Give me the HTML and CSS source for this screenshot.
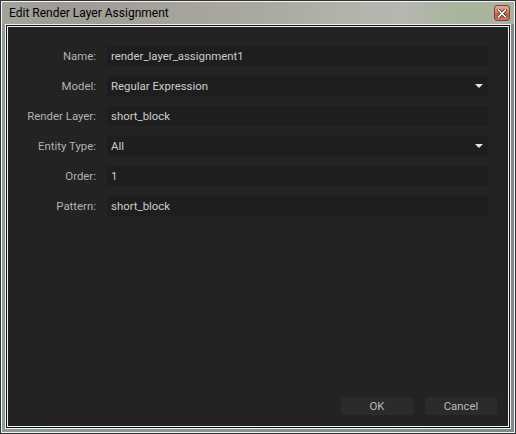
FILE: index.html
```html
<!DOCTYPE html>
<html>
<head>
<meta charset="utf-8">
<link rel="stylesheet" href="styles.css">
</head>
<body>
<div class="window">
  <div class="titlebar">
    <span class="title">Edit Render Layer Assignment</span>
    <div class="close">
      <svg width="10" height="9" viewBox="0 0 10 9">
        <path d="M1.5 1 L8.5 8 M8.5 1 L1.5 8" stroke="#3a3a3a" stroke-width="3.2" stroke-linecap="square"/>
        <path d="M1.5 1 L8.5 8 M8.5 1 L1.5 8" stroke="#ffffff" stroke-width="1.6" stroke-linecap="square"/>
      </svg>
    </div>
  </div>
  <div class="cf1"><div class="cf2"><div class="cf3">
    <div class="content">
      <div class="form">
        <label class="lbl">Name:</label>
        <div class="field">render_layer_assignment1</div>
        <label class="lbl">Model:</label>
        <div class="field combo">Regular Expression<span class="arrow"></span></div>
        <label class="lbl">Render Layer:</label>
        <div class="field">short_block</div>
        <label class="lbl">Entity Type:</label>
        <div class="field combo">All<span class="arrow"></span></div>
        <label class="lbl">Order:</label>
        <div class="field">1</div>
        <label class="lbl">Pattern:</label>
        <div class="field">short_block</div>
      </div>
      <div class="buttons">
        <div class="btn">OK</div>
        <div class="btn">Cancel</div>
      </div>
    </div>
  </div></div></div>
</div>
</body>
</html>
```

FILE: styles.css
```css
html, body {
  margin: 0;
  padding: 0;
  background: #888;
}
.window {
  width: 516px;
  height: 434px;
  box-sizing: border-box;
  border: 1px solid #2e3336;
  box-shadow: inset 0 0 0 1px #f4f4f4;
  padding: 1px 4px 4px 4px;
  background: linear-gradient(90deg, #8f9a9c 0%, #8a9396 40%, #7d8a8c 100%);
  display: flex;
  flex-direction: column;
  font-family: Roboto, "Liberation Sans", Arial, sans-serif;
}
.titlebar {
  height: 22px;
  margin: 0 -3px;
  padding: 0 4px 0 7px;
  display: flex;
  align-items: center;
  justify-content: space-between;
  background: linear-gradient(90deg, #a3a39c 0%, #9e9a94 12%, #a5a19b 30%, #aaa9a0 50%, #b3b3ac 68%, #b7b7b1 78%, #a9b59e 88%, #a8b4a0 100%);
}
.title {
  font-size: 12px;
  color: #000;
}
.close {
  width: 16px;
  height: 16px;
  box-sizing: border-box;
  border: 1px solid #6a4a44;
  border-radius: 3px;
  background: linear-gradient(180deg, #f2a58f 0%, #e47a5e 45%, #d5573c 55%, #dc6e52 100%);
  display: flex;
  align-items: center;
  justify-content: center;
}
.close svg { display: block; }
.cf1 {
  flex: 1;
  border: 1px solid #f2f2f2;
  display: flex;
}
.cf2 {
  flex: 1;
  border: 1px solid #111;
  display: flex;
}
.cf3 {
  flex: 1;
  border: 1px solid #f2f2f2;
  display: flex;
}
.content {
  flex: 1;
  background: #232323;
  display: flex;
  flex-direction: column;
  justify-content: space-between;
  padding: 19px 11px 11px 0;
}
.form {
  display: grid;
  grid-template-columns: 88px 381px;
  column-gap: 11px;
  row-gap: 10px;
}
.lbl {
  text-align: right;
  font-size: 11.4px;
  color: #b2b2b2;
  line-height: 20px;
  height: 20px;
}
.field {
  height: 20px;
  line-height: 20px;
  background: #1e1e1e;
  color: #cdcdcd;
  font-size: 11.4px;
  padding-left: 4px;
  position: relative;
}
.arrow {
  position: absolute;
  right: 5px;
  top: 8px;
  width: 0;
  height: 0;
  border-left: 4px solid transparent;
  border-right: 4px solid transparent;
  border-top: 4px solid #e6e6e6;
}
.buttons {
  display: flex;
  justify-content: flex-end;
  gap: 12px;
}
.btn {
  width: 72px;
  height: 18px;
  line-height: 18px;
  text-align: center;
  background: #2b2b2b;
  border-radius: 3px;
  color: #b9b9b9;
  font-size: 11.4px;
}
```
